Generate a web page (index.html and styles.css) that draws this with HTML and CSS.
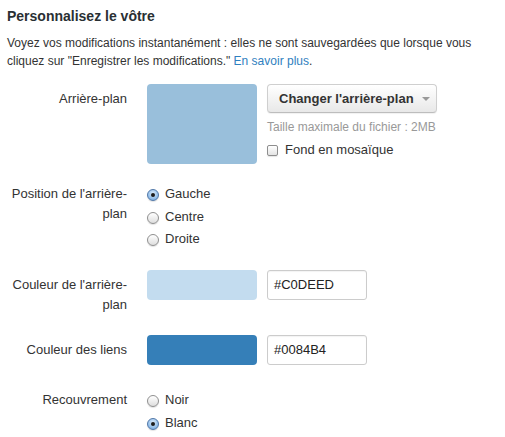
FILE: index.html
```html
<!DOCTYPE html>
<html lang="fr">
<head>
<meta charset="utf-8">
<title>Personnalisez le vôtre</title>
<link rel="stylesheet" href="styles.css">
</head>
<body>
<div class="page">
  <h2 class="title">Personnalisez le vôtre</h2>
  <p class="intro">Voyez vos modifications instantanément : elles ne sont sauvegardées que lorsque vous cliquez sur "Enregistrer les modifications." <a href="#" class="link">En savoir plus</a>.</p>

  <div class="row row-first">
    <div class="lbl">Arrière-plan</div>
    <div class="ctrl">
      <div class="swatch swatch-big"></div>
      <div class="upload">
        <button class="btn">Changer l'arrière-plan <span class="caret"></span></button>
        <div class="help">Taille maximale du fichier : 2MB</div>
        <label class="check"><span class="box"></span>Fond en mosaïque</label>
      </div>
    </div>
  </div>

  <div class="row">
    <div class="lbl">Position de l'arrière-plan</div>
    <div class="ctrl radios">
      <label class="opt"><span class="radio on"></span>Gauche</label>
      <label class="opt"><span class="radio"></span>Centre</label>
      <label class="opt"><span class="radio"></span>Droite</label>
    </div>
  </div>

  <div class="row row-color">
    <div class="lbl">Couleur de l'arrière-plan</div>
    <div class="ctrl">
      <div class="swatch swatch-bar light"></div>
      <div class="field">#C0DEED</div>
    </div>
  </div>

  <div class="row row-color">
    <div class="lbl">Couleur des liens</div>
    <div class="ctrl">
      <div class="swatch swatch-bar dark"></div>
      <div class="field">#0084B4</div>
    </div>
  </div>

  <div class="row">
    <div class="lbl">Recouvrement</div>
    <div class="ctrl radios">
      <label class="opt"><span class="radio"></span>Noir</label>
      <label class="opt"><span class="radio on"></span>Blanc</label>
    </div>
  </div>
</div>
</body>
</html>
```

FILE: styles.css
```css
html, body {
  margin: 0;
  padding: 0;
  background: #fff;
}
body {
  font-family: "Liberation Sans", Arial, Helvetica, sans-serif;
  font-size: 13px;
  color: #333;
}
.page {
  padding: 6px 7px 0 7px;
}
.title {
  margin: 0 0 8px 0;
  font-size: 14px;
  line-height: 20px;
  font-weight: bold;
  color: #292f33;
}
.intro {
  margin: 0 0 14px 0;
  font-size: 12px;
  line-height: 18px;
  width: 480px;
}
.link {
  color: #2f80c0;
  text-decoration: none;
}
.row {
  display: flex;
  align-items: flex-start;
  margin-bottom: 19px;
}
.row-first {
  margin-bottom: 14.5px;
}
.row-color {
  margin-bottom: 20px;
}
.lbl {
  flex: none;
  width: 120px;
  margin-right: 20px;
  padding-top: 5px;
  line-height: 20px;
  text-align: right;
}
.ctrl {
  display: flex;
  align-items: flex-start;
}
.swatch {
  flex: none;
  width: 110px;
  border-radius: 4px;
  margin-right: 10px;
}
.swatch-big {
  height: 80px;
  background: #99bfdb;
}
.swatch-bar {
  height: 30px;
}
.light { background: #c3dcef; }
.dark { background: #357fb8; }

.upload {
  display: flex;
  flex-direction: column;
  align-items: flex-start;
}
.btn {
  box-sizing: border-box;
  width: 170px;
  height: 29px;
  margin: 0;
  padding: 0 0 0 11px;
  text-align: left;
  font-family: inherit;
  font-size: 13px;
  font-weight: bold;
  color: #333;
  border: 1px solid #cfcfcf;
  border-bottom-color: #bdbdbd;
  border-radius: 4px;
  background: linear-gradient(#ffffff, #e8e8e8);
  box-shadow: 0 1px 1px rgba(0,0,0,0.06);
  display: flex;
  align-items: center;
}
.caret {
  display: inline-block;
  width: 0;
  height: 0;
  margin-left: 8px;
  margin-top: 1px;
  border-left: 4px solid transparent;
  border-right: 4px solid transparent;
  border-top: 4px solid #999;
}
.help {
  margin-top: 5px;
  line-height: 18px;
  font-size: 12px;
  color: #999;
}
.check {
  margin-top: 4.5px;
  line-height: 18px;
  display: flex;
  align-items: center;
}
.box {
  box-sizing: border-box;
  width: 11px;
  height: 11px;
  margin: 2px 7px 0 0;
  border: 1px solid #8e8e8e;
  border-radius: 2px;
  background: linear-gradient(#ffffff, #e4e4e4);
  box-shadow: 0 1px 1px rgba(0,0,0,0.1);
}
.radios {
  flex-direction: column;
  padding-top: 4.5px;
}
.opt {
  display: flex;
  align-items: center;
  height: 22.5px;
  line-height: 22.5px;
}
.radio {
  box-sizing: border-box;
  width: 12px;
  height: 12px;
  margin: 2px 6px 0 0;
  border-radius: 50%;
  border: 1px solid #8f8f8f;
  background: linear-gradient(#ffffff, #dedede);
  box-shadow: 0 1px 1px rgba(0,0,0,0.12);
  position: relative;
}
.radio.on {
  border-color: #5077a8;
  background: radial-gradient(circle at 50% 35%, #dcecfb 0%, #9cc4ec 55%, #6a9fd6 100%);
}
.radio.on::after {
  content: "";
  position: absolute;
  left: 3px;
  top: 3px;
  width: 4px;
  height: 4px;
  border-radius: 50%;
  background: #1c1c1c;
}
.field {
  box-sizing: border-box;
  width: 100px;
  height: 30px;
  padding: 0 6px;
  line-height: 28px;
  color: #222;
  border: 1px solid #cccccc;
  border-radius: 3px;
  background: #fff;
  box-shadow: inset 0 1px 1px rgba(0,0,0,0.05);
}
```
